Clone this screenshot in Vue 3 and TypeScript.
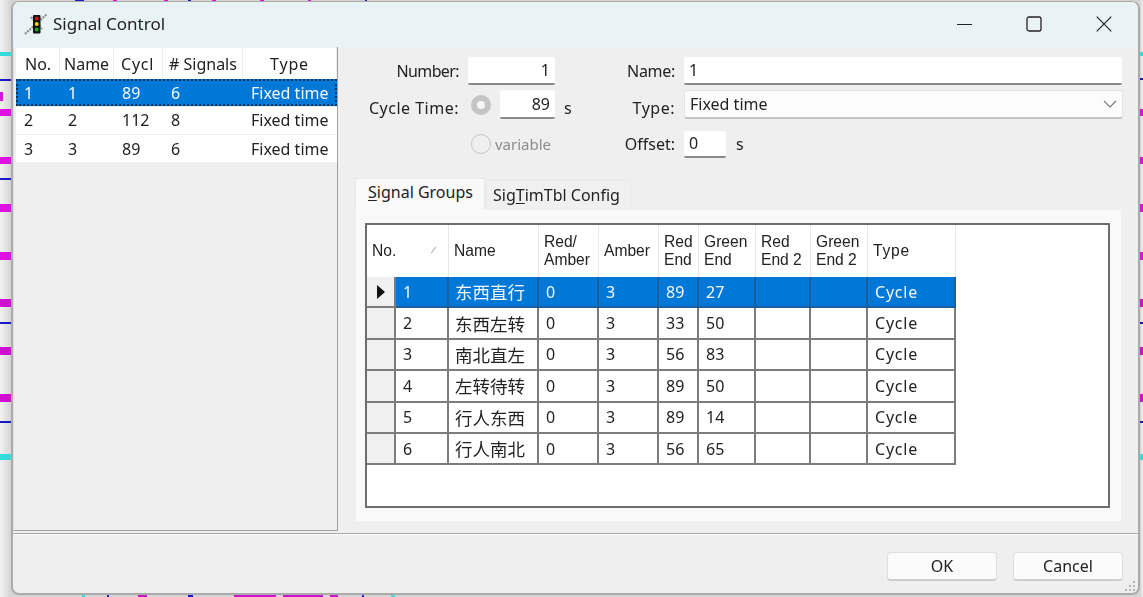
<script setup lang="ts">
const stripes = [
  { x: 0, y: 52, w: 11, h: 4, c: '#35dcdc' }, { x: 0, y: 79, w: 11, h: 2, c: '#1a1ac0' },
  { x: 0, y: 92, w: 3, h: 9, c: '#e010e0' }, { x: 0, y: 109, w: 11, h: 7, c: '#e010e0' },
  { x: 0, y: 157, w: 11, h: 7, c: '#e010e0' }, { x: 0, y: 178, w: 11, h: 2, c: '#1a1ac0' },
  { x: 0, y: 204, w: 11, h: 8, c: '#e010e0' }, { x: 0, y: 252, w: 11, h: 8, c: '#e010e0' },
  { x: 0, y: 299, w: 11, h: 8, c: '#d010d0' }, { x: 0, y: 322, w: 11, h: 2, c: '#1a1ac0' },
  { x: 0, y: 347, w: 11, h: 8, c: '#d010d0' }, { x: 0, y: 394, w: 11, h: 8, c: '#d010d0' },
  { x: 0, y: 421, w: 11, h: 2, c: '#1a1ac0' }, { x: 0, y: 454, w: 11, h: 6, c: '#35dcdc' },
  { x: 1140, y: 52, w: 3, h: 4, c: '#35dcdc' }, { x: 1140, y: 78, w: 3, h: 2, c: '#1a1ac0' },
  { x: 1140, y: 109, w: 3, h: 7, c: '#e010e0' }, { x: 1140, y: 157, w: 3, h: 7, c: '#e010e0' },
  { x: 1140, y: 204, w: 3, h: 8, c: '#e010e0' }, { x: 1140, y: 252, w: 3, h: 8, c: '#e010e0' },
  { x: 1140, y: 299, w: 3, h: 8, c: '#d010d0' }, { x: 1140, y: 322, w: 3, h: 2, c: '#1a1ac0' },
  { x: 1140, y: 347, w: 3, h: 8, c: '#d010d0' }, { x: 1140, y: 394, w: 3, h: 8, c: '#d010d0' },
  { x: 1140, y: 421, w: 3, h: 2, c: '#1a1ac0' }, { x: 1140, y: 454, w: 3, h: 6, c: '#35dcdc' },
  { x: 75, y: 0, w: 9, h: 1, c: '#1a1ac0' }, { x: 113, y: 0, w: 4, h: 1, c: '#e010e0' },
  { x: 164, y: 0, w: 4, h: 1, c: '#e010e0' }, { x: 188, y: 0, w: 3, h: 1, c: '#1a1ac0' },
  { x: 212, y: 0, w: 4, h: 1, c: '#e010e0' }, { x: 260, y: 0, w: 4, h: 1, c: '#e010e0' },
  { x: 308, y: 0, w: 3, h: 1, c: '#e010e0' }, { x: 365, y: 0, w: 2, h: 1, c: '#1a1ac0' },
  { x: 82, y: 595, w: 3, h: 2, c: '#35dcdc' }, { x: 107, y: 595, w: 2, h: 2, c: '#1a1ac0' },
  { x: 138, y: 595, w: 9, h: 2, c: '#d010d0' }, { x: 188, y: 595, w: 5, h: 2, c: '#1a1ac0' },
  { x: 234, y: 595, w: 42, h: 2, c: '#d010d0' }, { x: 283, y: 595, w: 40, h: 2, c: '#d010d0' },
  { x: 330, y: 595, w: 8, h: 2, c: '#d010d0' }, { x: 362, y: 595, w: 2, h: 2, c: '#1a1ac0' },
  { x: 391, y: 595, w: 4, h: 2, c: '#35dcdc' },
]

const listRows = [
  { no: 1, name: '1', cycle: 89, signals: 6, type: 'Fixed time' },
  { no: 2, name: '2', cycle: 112, signals: 8, type: 'Fixed time' },
  { no: 3, name: '3', cycle: 89, signals: 6, type: 'Fixed time' },
]

const groups = [
  { no: 1, name: '东西直行', ra: 0, amber: 3, red: 89, green: 27 },
  { no: 2, name: '东西左转', ra: 0, amber: 3, red: 33, green: 50 },
  { no: 3, name: '南北直左', ra: 0, amber: 3, red: 56, green: 83 },
  { no: 4, name: '左转待转', ra: 0, amber: 3, red: 89, green: 50 },
  { no: 5, name: '行人东西', ra: 0, amber: 3, red: 89, green: 14 },
  { no: 6, name: '行人南北', ra: 0, amber: 3, red: 56, green: 65 },
]
</script>

<template>
  <div class="screen">
    <i
      v-for="(s, i) in stripes"
      :key="i"
      class="stripe"
      :style="{ left: s.x + 'px', top: s.y + 'px', width: s.w + 'px', height: s.h + 'px', background: s.c }"
    ></i>

    <div class="window">
      <header class="titlebar">
        <svg class="app-icon" width="26" height="24" viewBox="0 0 26 24">
          <path d="M1 22 L23 2 M7 5 L18 17" stroke="#8c8c8c" stroke-width="2.2" stroke-dasharray="2 1" fill="none" />
          <rect x="9" y="3" width="7.5" height="18.5" rx="1" fill="#111" />
          <circle cx="12.7" cy="6.5" r="2" fill="#c81818" />
          <circle cx="12.7" cy="12" r="2" fill="#e8d818" />
          <circle cx="12.7" cy="17.5" r="2" fill="#18a828" />
        </svg>
        <span class="title">Signal Control</span>
        <div class="caption">
          <svg class="min" width="16" height="16" viewBox="0 0 16 16"><path d="M0 8.5H15" stroke="#222" stroke-width="1" /></svg>
          <svg width="16" height="16" viewBox="0 0 16 16"><rect x="1" y="1" width="14" height="14" rx="2" fill="none" stroke="#222" stroke-width="1.3" /></svg>
          <svg width="16" height="16" viewBox="0 0 16 16"><path d="M.7 .7L15.3 15.3M15.3 .7L.7 15.3" stroke="#222" stroke-width="1.2" /></svg>
        </div>
      </header>

      <div class="body">
        <aside class="list">
          <div class="list-row list-head">
            <span>No.</span><span>Name</span><span class="stretch">Cycl</span><span># Signals</span><span class="center stretch">Type</span>
          </div>
          <div v-for="(r, i) in listRows" :key="r.no" class="list-row" :class="{ selected: i === 0 }">
            <span>{{ r.no }}</span><span>{{ r.name }}</span><span>{{ r.cycle }}</span><span>{{ r.signals }}</span><span>{{ r.type }}</span>
          </div>
        </aside>

        <section class="main">
          <div class="form">
            <label class="lbl tight">Number:</label>
            <div class="ctl end"><div class="input num wide">1</div></div>
            <label class="lbl tight-sm">Name:</label>
            <div class="ctl last"><div class="input fill">1</div></div>

            <label class="lbl low loose">Cycle Time:</label>
            <div class="ctl cycle">
              <span class="radio on"></span>
              <div class="input num short">89</div>
            </div>
            <div class="split low"><span class="unit">s</span><label class="lbl loose">Type:</label></div>
            <div class="ctl last">
              <div class="combo">
                <span>Fixed time</span>
                <svg width="14" height="8" viewBox="0 0 14 8"><path d="M1 1L7 7L13 1" fill="none" stroke="#777" stroke-width="1.1" /></svg>
              </div>
            </div>

            <span></span>
            <div class="ctl variable"><span class="radio"></span><span class="muted">variable</span></div>
            <label class="lbl">Offset:</label>
            <div class="ctl offset last"><div class="input small">0</div><span class="unit">s</span></div>
          </div>

          <div class="tabs">
            <div class="tab active"><u>S</u>ignal Groups</div>
            <div class="tab">Sig<u>T</u>imTbl Config</div>
          </div>
          <div class="tabpanel">
            <div class="grid">
              <div class="g-row g-head">
                <div class="g-no-head"><span>No.</span><i class="sort"></i></div>
                <div>Name</div><div>Red/<br />Amber</div><div>Amber</div><div>Red<br />End</div>
                <div>Green<br />End</div><div>Red<br />End 2</div><div>Green<br />End 2</div><div class="stretch">Type</div>
              </div>
              <div v-for="(g, i) in groups" :key="g.no" class="g-row g-body" :class="{ current: i === 0 }">
                <div class="rowhead"><i v-if="i === 0" class="arrow"></i></div>
                <div class="c no">{{ g.no }}</div>
                <div class="c cjk">{{ g.name }}</div>
                <div class="c">{{ g.ra }}</div>
                <div class="c">{{ g.amber }}</div>
                <div class="c">{{ g.red }}</div>
                <div class="c">{{ g.green }}</div>
                <div class="c"></div>
                <div class="c"></div>
                <div class="c stretch">Cycle</div>
              </div>
            </div>
          </div>
        </section>
      </div>

      <footer class="footer">
        <button class="btn" type="button">OK</button>
        <button class="btn" type="button">Cancel</button>
        <svg class="grip" width="12" height="12" viewBox="0 0 12 12" fill="#b4b4b4">
          <rect x="9" y="1" width="2" height="2" /><rect x="5" y="5" width="2" height="2" /><rect x="9" y="5" width="2" height="2" />
          <rect x="1" y="9" width="2" height="2" /><rect x="5" y="9" width="2" height="2" /><rect x="9" y="9" width="2" height="2" />
        </svg>
      </footer>
    </div>
  </div>
</template>

<style scoped>
.screen {
  position: relative;
  width: 1143px;
  height: 597px;
  overflow: hidden;
  background: linear-gradient(90deg, #f2f2f2 0, #d4d4d4 11px, #d4d4d4 1140px, #f0f0f0 1143px);
  font-family: "Noto Sans", "Noto Sans CJK SC", sans-serif;
  font-size: 16px;
  color: #222;
  padding: 1px 3px 2px 11px;
  box-sizing: border-box;
}
.stripe { position: absolute; display: block; }
.window {
  position: relative;
  width: 100%;
  height: 100%;
  box-sizing: border-box;
  display: flex;
  flex-direction: column;
  background: #efefef;
  border: 1px solid #aaa;
  border-width: 1px 2px 2px 2px;
  border-radius: 8px;
  overflow: hidden;
  filter: blur(0.35px);
}
.titlebar {
  flex: none;
  height: 45px;
  box-sizing: border-box;
  padding: 0 0 2px 11px;
  display: flex;
  align-items: center;
  background: #e9f3f6;
}
.app-icon { margin-right: 3px; }
.title { font-size: 17px; }
.caption {
  margin-left: auto;
  display: flex;
  align-items: center;
  gap: 54px;
  padding-right: 26px;
}
.min { margin-right: -1px; }
.body { flex: 1; display: flex; min-height: 0; }
.list {
  flex: none;
  width: 325px;
  box-sizing: border-box;
  border-right: 1px solid #a0a0a0;
  border-bottom: 1px solid #a0a0a0;
  border-left: 1px solid #e0e0e0;
  padding: 1px 0 0 2px;
  background: #efefef;
}
.list-row {
  display: grid;
  grid-template-columns: 44px 54px 49px 80px 94px;
  height: 27px;
  margin-bottom: 1.5px;
  align-items: center;
  background: #fff;
}
.list-row span { padding-left: 8px; white-space: nowrap; overflow: hidden; }
.list-head { height: 31px; margin-bottom: 0; }
.list-head span {
  height: 100%;
  display: flex;
  align-items: center;
  padding-left: 9px;
  border-right: 1px solid #eee;
  box-sizing: border-box;
}
.list-head span:nth-child(2) { padding-left: 4px; }
.list-head span:nth-child(3) { padding-left: 7px; }
.list-head span:nth-child(4) { padding-left: 6px; }
.list-head span.center { justify-content: center; padding-left: 0; }
.stretch { letter-spacing: 0.8px; }
.selected {
  background: #0078d7;
  color: #f4f9fd;
  outline: 2px dotted #0b3358;
  outline-offset: -2px;
  margin-bottom: 0.5px;
}
.main { flex: 1; min-width: 0; display: flex; flex-direction: column; padding-left: 1px; }
.form {
  display: grid;
  grid-template-columns: 120px 96px 120px 448px;
  grid-template-rows: 28px 29px 27px;
  row-gap: 5px;
  padding-top: 10px;
  align-items: center;
}
.form > :nth-child(n + 9) { margin-top: 13px; }
.lbl { text-align: right; white-space: nowrap; }
.tight { letter-spacing: -0.6px; }
.tight-sm { letter-spacing: -0.3px; }
.loose { letter-spacing: 0.5px; }
.low { padding-top: 7px; }
.ctl { height: 100%; display: flex; align-items: center; }
.last { padding-left: 9px; }
.end { justify-content: flex-end; }
.input {
  box-sizing: border-box;
  height: 100%;
  background: #fff;
  border-bottom: 2px solid #8a8a8a;
  border-radius: 2px;
  padding: 0 5px;
  display: flex;
  align-items: center;
}
.num { justify-content: flex-end; }
.wide { width: 87px; }
.short { width: 55px; margin-left: 9px; }
.small { width: 42px; }
.fill { width: 438px; }
.cycle { padding-left: 12px; }
.radio {
  flex: none;
  width: 20px;
  height: 20px;
  box-sizing: border-box;
  border-radius: 50%;
  border: 1.5px solid #c4c4c4;
  background: #efefef;
}
.radio.on { border: 6px solid #c4c4c4; background: #f6f6f6; }
.split { display: flex; justify-content: space-between; align-items: center; }
.unit { padding-left: 9px; }
.combo {
  box-sizing: border-box;
  width: 439px;
  height: 100%;
  background: #fcfcfc;
  border: 1px solid #e4e4e4;
  border-bottom: 2px solid #c4c4c4;
  border-radius: 3px;
  display: flex;
  align-items: center;
  justify-content: space-between;
  padding: 0 5px;
}
.variable { padding-left: 12px; gap: 4px; }
.muted { color: #8c8c8c; font-size: 15px; }
.offset .unit { padding-left: 10px; }
.tabs { display: flex; align-items: flex-end; height: 32px; margin-top: 26px; margin-left: 16px; }
.tab {
  box-sizing: border-box;
  height: 29px;
  padding: 0 6px;
  width: 145px;
  background: #f0f0f0;
  border: 1px solid #e8e8e8;
  border-bottom: none;
  display: flex;
  align-items: center;
  white-space: pre;
}
.tab.active {
  height: 32px;
  width: 130px;
  margin-right: 1px;
  background: #f9f9f9;
  padding: 0 0 5px 12px;
  position: relative;
  z-index: 1;
  margin-bottom: -1px;
}
.tabpanel {
  box-sizing: border-box;
  width: 767px;
  height: 313px;
  margin-left: 16px;
  background: #f9f9f9;
  border: 1px solid #efefef;
  padding: 13px 11px 12px 9px;
}
.grid {
  box-sizing: border-box;
  height: 285px;
  background: #fff;
  border: 2px solid #6e6e6e;
}
.g-row {
  display: grid;
  grid-template-columns: 29px 53px 90px 60px 60px 40px 57px 55px 57px 88px;
  width: fit-content;
}
.g-head {
  grid-template-columns: 82px 90px 60px 60px 40px 57px 55px 57px 88px;
  height: 52px;
  line-height: 18px;
  font-family: "Liberation Sans", sans-serif;
  font-size: 15.6px;
}
.g-head > div {
  display: flex;
  align-items: center;
  padding-left: 5px;
  border-right: 1px solid #e8e8e8;
  box-sizing: border-box;
  white-space: nowrap;
}
.g-no-head { position: relative; }
.sort {
  position: absolute;
  left: 66px;
  top: 21px;
  width: 1px;
  height: 8px;
  background: #aaa;
  transform: rotate(35deg);
}
.g-body { height: 31.4px; }
.g-body > div { box-sizing: border-box; border-right: 2px solid #7c7c7c; border-bottom: 2px solid #7c7c7c; }
.rowhead { background: #f0f0f0; position: relative; }
.arrow {
  position: absolute;
  left: 10px;
  top: 8px;
  border-left: 8px solid #111;
  border-top: 7px solid transparent;
  border-bottom: 7px solid transparent;
}
.c {
  display: flex;
  align-items: center;
  padding-left: 7px;
  background: #fff;
  white-space: nowrap;
}
.cjk { font-size: 17.5px; padding-left: 6px; font-family: "Noto Sans CJK SC", sans-serif; }
.current .c { background: #0078d7; color: #f2f8fd; border-color: #1a5f9c; }
.footer {
  position: relative;
  flex: none;
  height: 60px;
  box-sizing: border-box;
  margin-top: 2px;
  border-top: 1px solid #a8a8a8;
  box-shadow: inset 0 1px 0 #fbfbfb;
  display: flex;
  justify-content: flex-end;
  gap: 16px;
  padding: 18px 15px 0 0;
}
.btn {
  width: 110px;
  height: 29px;
  background: #fbfbfb;
  border: 1px solid #dedede;
  border-bottom: 2px solid #cdcdcd;
  border-radius: 4px;
  font: 16px "Noto Sans", sans-serif;
  color: #222;
}
.grip { position: absolute; right: 2px; bottom: 1px; }
u { text-underline-offset: 2px; }
</style>
